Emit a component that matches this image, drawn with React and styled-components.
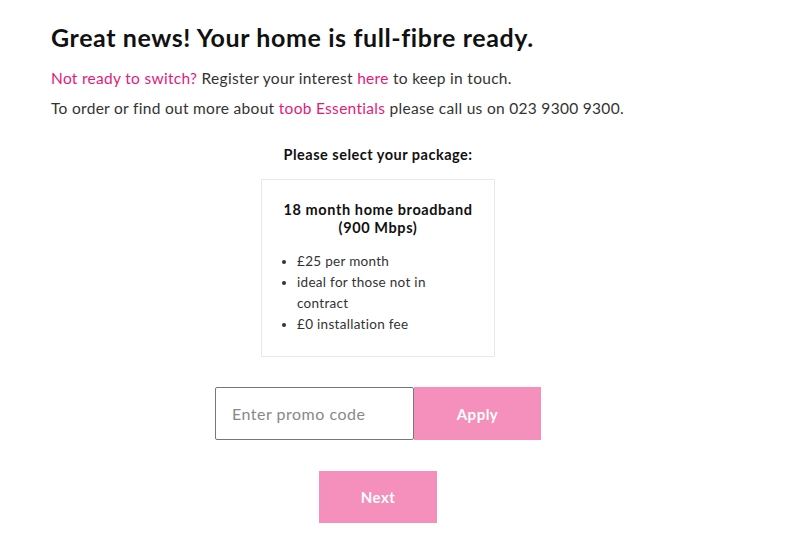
import React from "react";
import styled, { createGlobalStyle } from "styled-components";

const GlobalStyle = createGlobalStyle`
  body {
    margin: 0;
    background: #fff;
    font-family: "Lato", "Liberation Sans", sans-serif;
    color: #222;
  }
`;

const Page = styled.div`
  width: 654px;
  padding: 22px 0 0 51px;
`;

const Title = styled.h1`
  margin: 0 0 17px;
  font-size: 25px;
  font-weight: 700;
  color: #111;
  letter-spacing: 0.6px;
`;

const Line = styled.p`
  margin: 0 0 11px;
  font-size: 15.5px;
  line-height: 19px;
  letter-spacing: 0.3px;
  color: #333;
`;

const Pink = styled.a`
  color: #e6197b;
  text-decoration: none;
`;

const Center = styled.div`
  display: flex;
  flex-direction: column;
  align-items: center;
`;

const Label = styled.div`
  margin-top: 17px;
  font-size: 14.5px;
  font-weight: 700;
  letter-spacing: 0.5px;
  color: #111;
`;

const Card = styled.div`
  margin-top: 16px;
  width: 234px;
  height: 178px;
  box-sizing: border-box;
  border: 1px solid #e8e8e8;
  padding: 21px 40px 0 18px;
`;

const CardTitle = styled.div`
  margin-right: -22px;
  text-align: center;
  font-size: 14.5px;
  font-weight: 700;
  line-height: 18px;
  letter-spacing: 0.6px;
  color: #111;
`;

const List = styled.ul`
  margin: 14px 0 0;
  padding-left: 17px;
  font-size: 13.5px;
  line-height: 21px;
  letter-spacing: 0.3px;
  color: #333;
`;

const PromoRow = styled.div`
  margin-top: 30px;
  display: flex;
`;

const PromoInput = styled.input`
  width: 199px;
  height: 53px;
  box-sizing: border-box;
  border: 1px solid #777;
  border-radius: 2px;
  padding: 0 16px;
  font-family: inherit;
  font-size: 16px;
  letter-spacing: 0.5px;
  color: #333;
  outline: none;
  &::placeholder {
    color: #888;
  }
`;

const PinkButton = styled.button`
  width: ${p => p.$w}px;
  height: ${p => p.$h}px;
  margin-top: ${p => p.$mt || 0}px;
  border: none;
  background: #f490bb;
  color: #fff;
  font-family: inherit;
  font-size: 15px;
  font-weight: 700;
  letter-spacing: 0.5px;
  cursor: pointer;
`;

export default function App() {
  return (
    <>
      <GlobalStyle />
      <Page>
        <Title>Great news! Your home is full-fibre ready.</Title>
        <Line>
          <Pink href="#">Not ready to switch?</Pink> Register your interest{" "}
          <Pink href="#">here</Pink> to keep in touch.
        </Line>
        <Line>
          To order or find out more about <Pink href="#">toob Essentials</Pink>{" "}
          please call us on 023 9300 9300.
        </Line>
        <Center>
          <Label>Please select your package:</Label>
          <Card>
            <CardTitle>
              18 month home broadband
              <br />
              (900 Mbps)
            </CardTitle>
            <List>
              <li>£25 per month</li>
              <li>ideal for those not in contract</li>
              <li>£0 installation fee</li>
            </List>
          </Card>
          <PromoRow>
            <PromoInput placeholder="Enter promo code" />
            <PinkButton $w={127} $h={53}>Apply</PinkButton>
          </PromoRow>
          <PinkButton $w={118} $h={52} $mt={31}>Next</PinkButton>
        </Center>
      </Page>
    </>
  );
}
